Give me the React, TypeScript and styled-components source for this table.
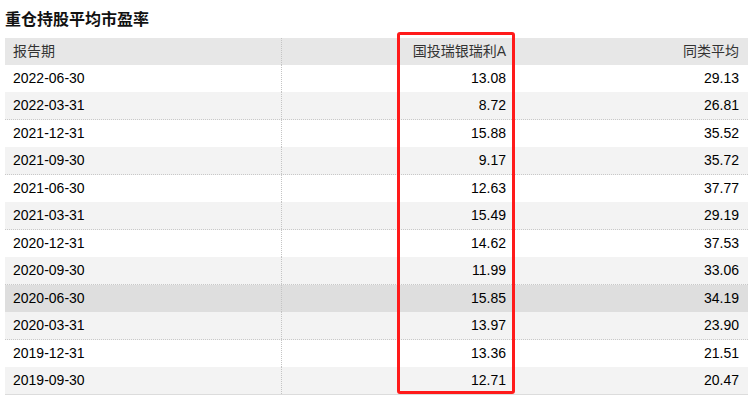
import styled, { createGlobalStyle } from 'styled-components';

const GlobalStyle = createGlobalStyle`
  html, body {
    margin: 0;
    padding: 0;
    background: #fff;
  }
  body {
    font-family: "Liberation Sans", "Noto Sans CJK SC", Arial, sans-serif;
    color: #000;
  }
`

const Page = styled.div`
  padding: 6px 5px 0 5px;
  width: 743px;
`

const Title = styled.h3`
  margin: 0 0 8px 0;
  font-size: 16px;
  line-height: 24px;
  font-weight: bold;
  color: #111;
  font-family: "Noto Sans CJK SC", "Liberation Sans", sans-serif;
`

const Table = styled.div`
  position: relative;
  font-size: 14px;
`

const Row = styled.div<{ $bg: string; $dotted?: boolean; $last?: boolean }>`
  display: grid;
  grid-template-columns: 277px 233px 233px;
  height: 27px;
  line-height: 27px;
  background: ${({ $bg }) => $bg};
  border-bottom: ${({ $dotted, $last }) =>
    $last ? '1px solid #dcdcdc' : $dotted ? '1px dotted #c8c8c8' : 'none'};
`

const Cell = styled.div<{ $right?: boolean; $head?: boolean }>`
  padding: ${({ $right }) => ($right ? '0 9px 0 0' : '0 0 0 8px')};
  text-align: ${({ $right }) => ($right ? 'right' : 'left')};
  color: ${({ $head }) => ($head ? '#333' : '#000')};
  white-space: nowrap;
`

const FirstCell = styled(Cell)`
  border-right: 1px dotted #c4c4c4;
`

const Highlight = styled.div`
  position: absolute;
  left: 392px;
  top: -6px;
  width: 112px;
  height: 356px;
  border: 3px solid #ff1a1a;
  border-radius: 3px;
  pointer-events: none;
`

const rows: [string, string, string][] = [
  ['2022-06-30', '13.08', '29.13'],
  ['2022-03-31', '8.72', '26.81'],
  ['2021-12-31', '15.88', '35.52'],
  ['2021-09-30', '9.17', '35.72'],
  ['2021-06-30', '12.63', '37.77'],
  ['2021-03-31', '15.49', '29.19'],
  ['2020-12-31', '14.62', '37.53'],
  ['2020-09-30', '11.99', '33.06'],
  ['2020-06-30', '15.85', '34.19'],
  ['2020-03-31', '13.97', '23.90'],
  ['2019-12-31', '13.36', '21.51'],
  ['2019-09-30', '12.71', '20.47'],
]

function App() {
  return (
    <>
      <GlobalStyle />
      <Page>
        <Title>重仓持股平均市盈率</Title>
        <Table>
          <Row $bg="#e7e7e7">
            <FirstCell $head>报告期</FirstCell>
            <Cell $head $right>国投瑞银瑞利A</Cell>
            <Cell $head $right>同类平均</Cell>
          </Row>
          {rows.map(([date, fund, avg], i) => {
            const odd = i % 2 === 1
            const hover = date === '2020-06-30'
            const bg = hover ? '#dedede' : odd ? '#f3f3f3' : '#fff'
            return (
              <Row key={date} $bg={bg} $dotted={odd} $last={i === rows.length - 1}>
                <FirstCell>{date}</FirstCell>
                <Cell $right>{fund}</Cell>
                <Cell $right>{avg}</Cell>
              </Row>
            )
          })}
          <Highlight />
        </Table>
      </Page>
    </>
  );
}

export default App;
